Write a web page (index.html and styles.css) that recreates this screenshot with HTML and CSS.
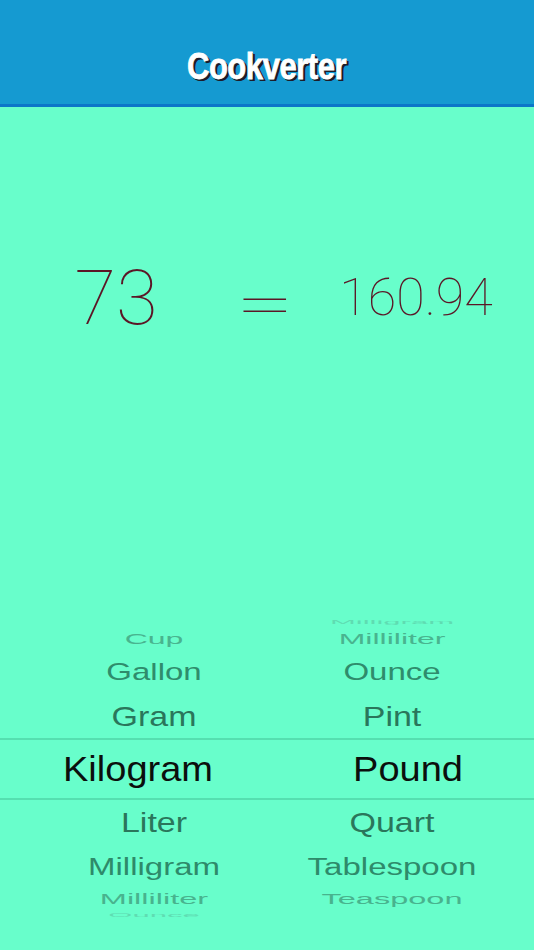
FILE: index.html
```html
<!DOCTYPE html>
<html>
<head>
<meta charset="utf-8">
<link rel="stylesheet" href="styles.css">
</head>
<body>
<header class="bar"><h1 class="title">Cookverter</h1></header>
<section class="equation">
  <div class="num num-in">73</div>
  <div class="eq">=</div>
  <div class="num num-out">160.94</div>
</section>
<section class="picker">
  <div class="row r-edge"><span></span><span class="t">Milligram</span></div>
  <div class="row r-far"><span class="t">Cup</span><span class="t">Milliliter</span></div>
  <div class="row r-mid"><span class="t">Gallon</span><span class="t">Ounce</span></div>
  <div class="row r-near"><span class="t">Gram</span><span class="t">Pint</span></div>
  <div class="row r-sel"><span class="t">Kilogram</span><span class="t">Pound</span></div>
  <div class="row r-near"><span class="t">Liter</span><span class="t">Quart</span></div>
  <div class="row r-mid2"><span class="t">Milligram</span><span class="t">Tablespoon</span></div>
  <div class="row r-far2"><span class="t">Milliliter</span><span class="t">Teaspoon</span></div>
  <div class="row r-edge2"><span class="t">Ounce</span><span></span></div>
</section>
</body>
</html>
```
FILE: styles.css
```css
html, body {
  margin: 0;
  padding: 0;
}
body {
  width: 534px;
  height: 950px;
  background: #68fecb;
  overflow: hidden;
  font-family: "Liberation Sans", Arial, sans-serif;
}
.bar {
  box-sizing: border-box;
  height: 107px;
  background: #159ad1;
  border-bottom: 3px solid #0b76c9;
  padding-top: 47px;
  text-align: center;
}
.title {
  display: inline-block;
  margin: 0;
  font-family: "Liberation Sans", sans-serif;
  font-weight: 700;
  font-size: 36px;
  line-height: 40px;
  letter-spacing: -0.5px;
  color: #ffffff;
  -webkit-text-stroke: 0.8px #ffffff;
  text-shadow: 2px 2px 0 #1d1d2a, 1px 1px 0 #1d1d2a, 3px 2px 0 #1d1d2a;
  transform: scaleX(0.86);
}
.equation {
  display: grid;
  grid-template-columns: 232px 66px 236px;
  align-items: center;
  height: 76px;
  margin-top: 153px;
  color: #5b1626;
  font-family: Roboto, "Liberation Sans", sans-serif;
  font-weight: 100;
}
.num, .eq {
  justify-self: center;
  line-height: 1;
}
.num-in {
  font-size: 76px;
}
.num-out {
  font-size: 52px;
}
.eq {
  font-size: 72px;
  transform: translateY(7px) scale(1.45, 0.82);
}
.picker {
  margin-top: 276px;
}
.row {
  display: grid;
  grid-template-columns: 268px 208px;
  grid-template-rows: minmax(0, 1fr);
  padding-left: 20px;
  align-items: center;
  justify-items: center;
  white-space: nowrap;
}
.t {
  display: inline-block;
  font-size: 33px;
  line-height: 1;
}
.r-edge { height: 18px; }
.r-edge .t { transform: scaleY(0.2); color: #5fdcb2; font-size: 31px; }
.r-far { height: 18px; }
.r-far .t { transform: scaleY(0.45); color: #49b48f; font-size: 32px; }
.r-mid { height: 46px; }
.r-mid .t { transform: scaleY(0.72); color: #2f8c6c; }
.r-near { height: 44px; }
.r-near .t { transform: scaleY(0.84); color: #2a765b; font-size: 34px; }
.r-sel {
  height: 58px;
  border-top: 2px solid #55dfb0;
  border-bottom: 2px solid #55dfb0;
  column-gap: 32px;
  padding-left: 4px;
}
.r-sel .t { font-size: 38px; transform: scaleY(0.92); color: #0b0f0d; }
.r-mid2 { height: 44px; }
.r-mid2 .t { transform: scaleY(0.74); color: #2e8a6a; }
.r-far2 { height: 22px; }
.r-far2 .t { transform: scaleY(0.44); color: #48b38e; font-size: 32.5px; }
.r-edge2 { height: 10px; }
.r-edge2 .t { transform: scaleY(0.18); color: #5fdcb2; font-size: 31px; }
```
